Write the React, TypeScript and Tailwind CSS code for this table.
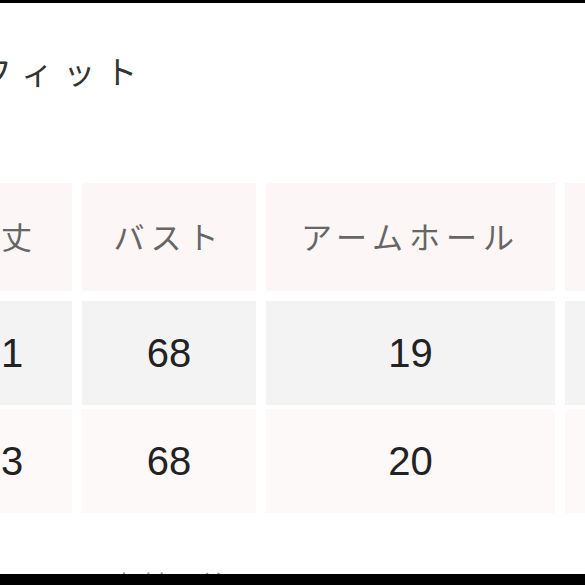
import React from "react";

const jp = { fontFamily: '"Noto Sans CJK JP", "Noto Sans", sans-serif' };
const num = { fontFamily: '"Liberation Sans", Arial, sans-serif' };

const headers = ["着丈", "バスト", "アームホール", "裾幅"];
const rows = [
  ["71", "68", "19", "60"],
  ["73", "68", "20", "62"],
];
const widths = ["w-[142px]", "w-[174px]", "w-[289px]", "w-[180px]"];

export default function App() {
  return (
    <div className="w-[585px] h-[585px] bg-white overflow-hidden flex flex-col">
      <div className="h-[3px] bg-black shrink-0" />
      <div className="h-[571px] overflow-hidden shrink-0 flex flex-col">
        <div
          className="mt-[51px] ml-[-20px] text-[32px] leading-[32px] tracking-[10px] text-[#333] whitespace-nowrap"
          style={jp}
        >
          フィット
        </div>
        <div className="mt-[97px] ml-[-70px] flex flex-col gap-[8px]">
          <div className="flex gap-[10px]">
            {headers.map((h, i) => (
              <div
                key={i}
                className={`${widths[i]} shrink-0 h-[108px] bg-[#fcf7f6] flex items-center justify-center text-[31px] leading-[31px] pb-[3px] tracking-[6px] text-[#666] whitespace-nowrap`}
                style={jp}
              >
                {h}
              </div>
            ))}
          </div>
          <div className="flex gap-[10px] mt-[2px]">
            {rows[0].map((v, i) => (
              <div
                key={i}
                className={`${widths[i]} shrink-0 h-[104px] bg-[#f3f3f3] flex items-center justify-center text-[40px] text-[#222]`}
                style={num}
              >
                {v}
              </div>
            ))}
          </div>
          <div className="flex gap-[10px] -mt-[4px]">
            {rows[1].map((v, i) => (
              <div
                key={i}
                className={`${widths[i]} shrink-0 h-[104px] bg-[#fdf9f8] flex items-center justify-center text-[40px] text-[#222]`}
                style={num}
              >
                {v}
              </div>
            ))}
          </div>
        </div>
        <div
          className="mt-[58px] ml-[112px] text-[24px] leading-[24px] tracking-[6px] text-[#888] whitespace-nowrap"
          style={jp}
        >
          素材：綿100%
        </div>
      </div>
      <div className="h-[11px] bg-black shrink-0" />
    </div>
  );
}
